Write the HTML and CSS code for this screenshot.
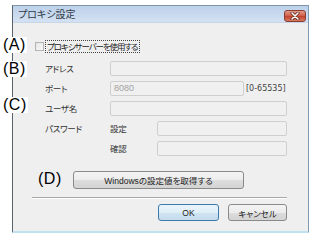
FILE: index.html
```html
<!DOCTYPE html>
<html lang="ja">
<head>
<meta charset="utf-8">
<link rel="stylesheet" href="styles.css">
</head>
<body>
<div class="page">
  <div class="window">
    <div class="titlebar">
      <span class="title">プロキシ設定</span>
      <span class="close"><svg width="10" height="8" viewBox="0 0 10 8"><path d="M2 1 L8 7 M8 1 L2 7" stroke="#5a2018" stroke-width="3" stroke-linecap="round"/><path d="M2 1 L8 7 M8 1 L2 7" stroke="#fff" stroke-width="1.6" stroke-linecap="round"/></svg></span>
    </div>
    <div class="client">
      <div class="chk-row">
        <span class="checkbox"></span>
        <span class="chk-label">プロキシサーバーを使用する</span>
      </div>
      <div class="form">
        <span class="lbl">アドレス</span>
        <span class="input span3"></span>
        <span class="lbl">ポート</span>
        <span class="input span2 val">8080</span>
        <span class="range">[0-65535]</span>
        <span class="lbl">ユーザ名</span>
        <span class="input span3"></span>
        <span class="lbl">パスワード</span>
        <span class="sub">設定</span>
        <span class="input span2"></span>
        <span class="lbl"></span>
        <span class="sub">確認</span>
        <span class="input span2"></span>
      </div>
      <div class="win-row">
        <span class="btn win-btn">Windowsの設定値を取得する</span>
      </div>
      <div class="sep"></div>
      <div class="actions">
        <span class="btn ok">OK</span>
        <span class="btn cancel">キャンセル</span>
      </div>
    </div>
  </div>
  <span class="note note-a">(A)</span>
  <span class="note note-b">(B)</span>
  <span class="note note-c">(C)</span>
  <span class="note note-d">(D)</span>
</div>
</body>
</html>
```
FILE: styles.css
```css
* { box-sizing: border-box; }
html, body { margin: 0; padding: 0; background: #fff; }
body {
  width: 321px; height: 242px; overflow: hidden;
  font-family: "Noto Sans CJK JP", "Liberation Sans", sans-serif;
  font-feature-settings: "palt";
  color: #2a2a2a;
}
.page { position: relative; width: 321px; height: 242px; padding: 5px 0 0 12px; }
.window {
  width: 297px; height: 228px;
  border-left: 1px solid #59636e;
  border-top: 1px solid #8194aa;
  border-right: 1px solid #7f9bb4;
  border-bottom: 2px solid #bfe1ee;
  background: #efefef;
  display: flex; flex-direction: column;
}
.titlebar {
  height: 17px;
  background: linear-gradient(#bdd1ea, #d3e1f2);
  border-bottom: 1px solid #c7d6e8;
  display: flex; align-items: center; justify-content: space-between;
  padding: 0 2px 0 5px;
}
.title { font-size: 10px; color: #303a46; line-height: 1; }
.close {
  width: 22px; height: 12px; margin-top: 4px;
  border: 1px solid #8a3c30; border-radius: 3px;
  background: linear-gradient(#e39d8c, #cf5a45 50%, #c0412c 51%, #d77a5f);
  display: flex; align-items: center; justify-content: center;
}
.client { flex: 1; display: flex; flex-direction: column; }
.chk-row {
  margin-top: 17px; height: 12px; padding-left: 22px;
  display: flex; align-items: center; gap: 2px;
}
.checkbox {
  width: 9px; height: 9px;
  border: 1px solid #b3b3b3;
  background: linear-gradient(135deg, #e6e6e6, #f8f8f8);
}
.chk-label {
  font-size: 8.5px; line-height: 11px; padding: 0 1px;
  letter-spacing: -1.1px;
  outline: 1px dotted #444; outline-offset: 0;
  color: #222;
}
.form {
  margin-top: 9px; padding-left: 32px;
  display: grid;
  grid-template-columns: 65px 47px 87px 43px;
  grid-auto-rows: 15px; row-gap: 5px;
  align-items: center;
}
.lbl, .sub { font-size: 8.5px; line-height: 15px; color: #333; letter-spacing: -0.3px; }
.input {
  height: 15px;
  border: 1px solid #cfcfcf; border-radius: 2px;
  background: #f0f0f0;
  font-family: "Liberation Sans", sans-serif;
  font-size: 9px; line-height: 13px; color: #a3a3a3; padding-left: 3px;
}
.span3 { grid-column: span 3; }
.span2 { grid-column: span 2; }
.range {
  font-family: "DejaVu Sans", sans-serif; font-size: 8px;
  color: #444; padding-left: 2px; white-space: nowrap;
}
.win-row { margin-top: 15px; padding-left: 60px; }
.btn {
  display: flex; align-items: center; justify-content: center;
  border: 1px solid #8a8a8a; border-radius: 3px;
  background: linear-gradient(#f4f4f4, #ececec 50%, #dddddd 51%, #d3d3d3);
  font-size: 8.5px; color: #222;
}
.win-btn { width: 171px; height: 18px; }
.win-btn { font-family: "Liberation Sans", "Noto Sans CJK JP", sans-serif; }
.sep {
  margin: 8px 0 0 19px; width: 255px;
  border-top: 1px solid #a8a8a8; border-bottom: 1px solid #fff;
}
.actions { margin-top: 5px; padding-left: 145px; display: flex; gap: 9px; }
.ok {
  width: 61px; height: 17px;
  border-color: #3d7bad;
  background: linear-gradient(#eaf4fb, #e0eef8 50%, #cfe4f3 51%, #c4dcee);
  font-family: "Liberation Sans", sans-serif;
}
.cancel { width: 59px; height: 17px; }
.note {
  position: absolute;
  font-family: "Liberation Sans", sans-serif; font-size: 16px; line-height: 16px;
  color: #000; background: #fff; padding: 0 1px; letter-spacing: 0.5px;
}
.note-a { left: 2px; top: 37px; }
.note-b { left: 2px; top: 61px; }
.note-c { left: 2px; top: 97px; }
.note-d { left: 37px; top: 171px; background: transparent; }
```
